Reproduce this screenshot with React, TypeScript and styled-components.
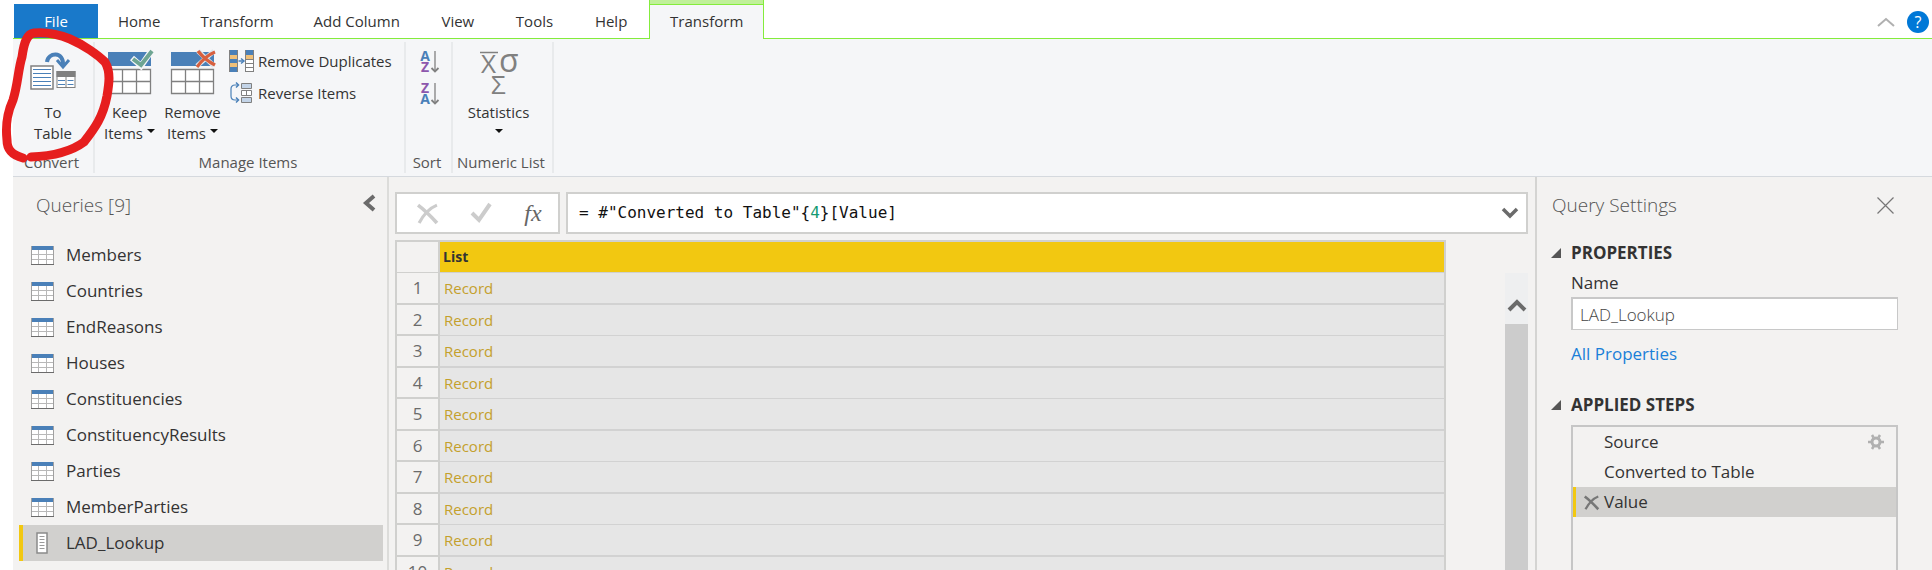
import React, { useState } from "react";
import styled, { createGlobalStyle, css } from "styled-components";

const c = {
  panel: "#f3f2f1",
  ribbon: "#f5f6f8",
  green: "#84ec3c",
  line: "#d0d0ce",
  text: "#333333",
  muted: "#6b6b6b",
  blue: "#4a80b8",
  yellow: "#f2c811",
  selected: "#d1d0ce",
};

const GlobalStyle = createGlobalStyle`
  *, *::before, *::after { box-sizing: border-box; }
  body {
    margin: 0;
    background: #ffffff;
    color: ${c.text};
    font: 15px/20px "Open Sans", "Noto Sans", sans-serif;
  }
  button, input { font: inherit; color: inherit; }
  button { padding: 0; border: 0; background: none; cursor: pointer; }
  ul, ol { margin: 0; padding: 0; list-style: none; }
  h2, h3 { margin: 0; }
  svg { display: block; flex: none; overflow: visible; }
`;

const Shell = styled.div`
  position: relative;
  display: flex;
  flex-direction: column;
  height: 100vh;
  padding-left: 13px;
  overflow: hidden;
`;

/* Tabs */

const TabBar = styled.nav`
  display: flex;
  align-items: stretch;
  height: 39px;
  padding-left: 1px;
  box-shadow: inset 0 -1px ${c.green};
`;

const Tab = styled.button<{ $kind?: "file" | "active" }>`
  min-width: 76px;
  padding: 4px 20px 1px;
  white-space: nowrap;
  ${(p) =>
    p.$kind === "file" &&
    css`
      width: 84px;
      margin: 4px 0 1px;
      padding: 0;
      background: #1979ca;
      color: #ffffff;
    `}
  ${(p) =>
    p.$kind === "active" &&
    css`
      border: 1px solid ${c.green};
      border-width: 0 1px;
      background: linear-gradient(#c0f09a 4px, ${c.green} 4px 5px, ${c.ribbon} 5px);
    `}
`;

const WindowTools = styled.div`
  display: flex;
  align-items: center;
  gap: 12px;
  margin-left: auto;
  padding: 4px 3px 0 0;
`;

const HelpButton = styled.button`
  width: 22px;
  height: 22px;
  border-radius: 50%;
  background: #0078d7;
  color: #ffffff;
  font-size: 16px;
`;

/* Ribbon */

const Ribbon = styled.div`
  display: flex;
  flex: none;
  padding: 3px 0;
  background: ${c.ribbon};
  border-bottom: 1px solid #d5d9de;
`;

const Group = styled.section<{ $width: number }>`
  display: flex;
  flex-direction: column;
  justify-content: space-between;
  width: ${(p) => p.$width}px;
  height: 131px;
  padding: 8px 0 1px;
  border-right: 2px solid #e8eaec;
`;

const GroupBody = styled.div<{ $center?: boolean; $end?: number }>`
  display: flex;
  justify-content: ${(p) => (p.$center ? "center" : "flex-start")};
  padding-left: ${(p) => (p.$center ? 0 : 3)}px;
  padding-right: ${(p) => p.$end ?? 0}px;
`;

const GroupLabel = styled.div`
  padding-right: 3px;
  color: #555555;
  text-align: center;
  white-space: nowrap;
`;

const LargeButton = styled.button`
  display: flex;
  flex-direction: column;
  align-items: center;
  width: 63px;
  line-height: 21px;
  white-space: nowrap;
`;

const LargeLabel = styled.span`
  display: flex;
  flex-direction: column;
  align-items: center;
  margin-top: 8px;
`;

const LabelLine = styled.span`
  display: flex;
  align-items: center;
  gap: 4px;
  min-height: 21px;
`;

const SmallColumn = styled.div`
  display: flex;
  flex-direction: column;
  gap: 10px;
`;

const ManageColumn = styled(SmallColumn)`
  padding-left: 5px;
`;

const SmallButton = styled.button`
  display: flex;
  align-items: center;
  gap: 4px;
  height: 22px;
  white-space: nowrap;
`;

const CaretShape = styled.span`
  border: 4px solid transparent;
  border-top-color: #111111;
  border-bottom: 0;
  margin-top: -6px;
`;

/* Work area */

const Work = styled.div`
  display: flex;
  flex: 1;
  min-height: 0;
  background: ${c.panel};
`;

const PanelHeader = styled.header`
  display: flex;
  align-items: center;
  justify-content: space-between;
  height: 56px;
`;

const PanelTitle = styled.h2`
  color: #555555;
  font-size: 19px;
  font-weight: 300;
  line-height: 24px;
`;

const QueriesPanel = styled.aside`
  flex: none;
  width: 376px;
  border-right: 2px solid #dcdcda;

  ${PanelHeader} { padding: 0 11px 0 23px; }
  ${PanelHeader} button { margin-top: -4px; }
`;

const QueryList = styled.ul`
  padding: 4px 4px 0 6px;
`;

const QueryItem = styled.button<{ $selected: boolean }>`
  display: flex;
  align-items: center;
  gap: 12px;
  width: 100%;
  height: 36px;
  padding-left: 8px;
  border-left: 4px solid ${(p) => (p.$selected ? c.yellow : "transparent")};
  background: ${(p) => (p.$selected ? c.selected : "transparent")};
  font-size: 17px;
  text-align: left;
`;

const Center = styled.main`
  display: flex;
  flex: 1;
  flex-direction: column;
  min-width: 0;
  padding: 15px 7px 0 6px;
`;

const FormulaRow = styled.div`
  display: flex;
  gap: 6px;
  height: 42px;
`;

const FormulaTools = styled.div`
  display: flex;
  align-items: center;
  gap: 32px;
  width: 165px;
  padding-left: 19px;
  border: 2px solid ${c.line};
  background: #ffffff;
`;

const ToolButton = styled.button`
  display: flex;
  align-items: center;
  justify-content: center;
  width: 22px;
  height: 32px;
`;

const FxButton = styled(ToolButton)`
  width: 18px;
  color: #666666;
  font: italic 24px/32px "Liberation Serif", serif;
`;

const FormulaBox = styled.div`
  display: flex;
  flex: 1;
  align-items: center;
  padding-right: 8px;
  border: 2px solid ${c.line};
  background: #ffffff;
`;

const FormulaEditor = styled.div`
  position: relative;
  flex: 1;
  padding-left: 11px;
  color: #111111;
  font: 16px/24px "DejaVu Sans Mono", monospace;
  white-space: pre;
`;

const FormulaNumber = styled.span`
  color: #159a72;
`;

/* Typing surface laid over the coloured formula. */
const FormulaInput = styled.input`
  position: absolute;
  inset: 0;
  width: 100%;
  padding: 0 0 0 11px;
  border: 0;
  outline: 0;
  background: transparent;
  color: transparent;
  caret-color: #111111;
`;

const GridArea = styled.div`
  display: flex;
  flex: 1;
  gap: 59px;
  min-height: 0;
  margin-top: 6px;
  overflow: hidden;
`;

const Grid = styled.table`
  flex: 1;
  align-self: flex-start;
  border: 2px solid ${c.line};
  border-width: 2px 2px 0;
  border-spacing: 0;
  table-layout: fixed;
`;

const Corner = styled.td`
  width: 43px;
  height: 31px;
  padding: 0;
  border-right: 2px solid ${c.line};
  border-bottom: 1px solid ${c.line};
`;

const ColumnHead = styled.th`
  padding: 0 3px;
  border-bottom: 1px solid ${c.line};
  background: ${c.yellow};
  font-size: 14px;
  text-align: left;
`;

const RowNumber = styled.th`
  padding: 0;
  border-right: 2px solid ${c.line};
  border-bottom: 2px solid ${c.line};
  color: ${c.muted};
  font-size: 17px;
  font-weight: 400;
`;

const RecordCell = styled.td`
  padding: 0 4px;
  border-bottom: 1px solid #d2d2d2;
  background: #e6e6e6;
`;

const GridRow = styled.tr`
  height: 31px;

  &:nth-child(odd) { height: 32px; }
  &:nth-child(odd) ${RecordCell} { border-bottom-width: 2px; }
`;

const RecordLink = styled.a`
  color: #c4a02c;
  text-decoration: none;
`;

const ScrollTrack = styled.div`
  display: flex;
  flex: none;
  flex-direction: column;
  width: 23px;
  margin-top: 33px;
  background: #eeeff0;
`;

const ScrollUp = styled.button`
  display: flex;
  align-items: flex-end;
  justify-content: center;
  height: 51px;
  padding-bottom: 12px;
`;

const ScrollThumb = styled.div`
  flex: 1;
  background: #cccccc;
`;

const SettingsPanel = styled.aside`
  display: flex;
  flex: none;
  flex-direction: column;
  width: 397px;
  padding: 0 34px 0 14px;
  border-left: 2px solid #d4d4d2;
  font-size: 17px;
  line-height: 24px;

  ${PanelHeader} { margin: 0 4px 8px 1px; }
`;

const SectionTitle = styled.h3`
  display: flex;
  align-items: center;
  gap: 10px;
  font-size: 17px;
  line-height: 24px;
`;

const SectionBody = styled.div<{ $grow?: boolean }>`
  display: flex;
  flex: ${(p) => (p.$grow ? 1 : "none")};
  flex-direction: column;
  align-items: stretch;
  padding-left: 20px;
`;

const FieldLabel = styled.label`
  margin-top: 6px;
`;

const NameInput = styled.input`
  height: 33px;
  margin: 2px 0 12px;
  padding: 0 7px;
  border: 1px solid #c8c8c8;
  border-top-width: 2px;
  border-left-width: 2px;
  background: #ffffff;
  color: #444444;
  font-weight: 300;
`;

const PropertiesLink = styled.a`
  align-self: flex-start;
  margin-bottom: 27px;
  color: #1a7fd8;
  text-decoration: none;
`;

const StepList = styled.ol`
  flex: 1;
  margin-top: 8px;
  border: 2px solid #c6c6c6;
  border-bottom: 0;
`;

const Step = styled.li<{ $selected: boolean }>`
  display: flex;
  align-items: center;
  height: 30px;
  padding-right: 12px;
  border-left: 3px solid ${(p) => (p.$selected ? c.yellow : "transparent")};
  background: ${(p) => (p.$selected ? c.selected : "transparent")};
`;

const StepDelete = styled.button`
  display: flex;
  justify-content: flex-end;
  width: 23px;
  margin-right: 5px;
`;

const StepName = styled.button`
  flex: 1;
  text-align: left;
`;

const Annotation = styled.svg`
  position: absolute;
  top: 0;
  left: 0;
  pointer-events: none;
`;

/* Icons */

const ToTableIcon = () => (
  <svg width="46" height="44" viewBox="0 0 46 44" fill="none">
    <path d="M17 12C18 2 34 1 33 15" stroke={c.blue} strokeWidth="4" />
    <path d="M27 10l6 7 6-7" stroke={c.blue} strokeWidth="3" />
    <rect x="1" y="16" width="22" height="23" fill="#fff" stroke="#808080" strokeWidth="1.500" />
    <path d="M3 19.500h18M3 23.500h18M3 27.500h18M3 31.500h18M3 35.500h18" stroke={c.blue} />
    <rect x="27" y="21.500" width="18" height="16" fill="#fff" stroke="#808080" />
    <path d="M26.500 24h19" stroke="#808080" strokeWidth="6" />
    <path d="M36 27v10" stroke="#808080" />
    <path d="M28 30.500h7M37.500 30.500h6M28 34.500h7M37.500 34.500h6" stroke={c.blue} />
  </svg>
);

const ItemsIcon = ({ mark }: { mark: "check" | "cross" }) => (
  <svg width="46" height="44" viewBox="0 0 46 44" fill="none">
    <path d="M1 2h43v14H1z" fill={c.blue} />
    <path d="M1.500 19.500h42v24h-42zM15.500 19v24M29.500 19v24M1 31.500h43" fill="#fff" stroke="#808080" strokeWidth="1.300" />
    {mark === "check" ? (
      <>
        <path d="M25 8l9 8L45 0" stroke="#f5f6f8" strokeWidth="6" />
        <path d="M26 9l8 6L45 1" stroke="#6ea592" strokeWidth="4" />
      </>
    ) : (
      <>
        <path d="M28 1l16 15M44 1L27 16" stroke="#dfe6ee" strokeWidth="5" />
        <path d="M28 1Q35 10 45 15" stroke="#d7603f" strokeWidth="3.500" />
        <path d="M45 2Q35 6 27 17" stroke="#d7603f" strokeWidth="3" />
      </>
    )}
  </svg>
);

const DuplicatesIcon = () => (
  <svg width="25" height="22" viewBox="0 0 25 22" fill="none">
    <path d="M1 0h7v22H1zM17 0h7v22h-7z" fill="#fff" />
    <path d="M1 0h7v5H1zM1 9h7v4H1zM1 17h7v5H1zM17 0h7v5h-7z" fill={c.blue} />
    <path d="M1 5h7v4H1zM1 13h7v4H1zM17 5h7v4h-7z" fill="#f0c078" />
    <path d="M.5 0v22M8.500 0v22M16.500 0v22M24.500 0v22M17 13.500h7M17 17.500h7M17 21.500h7M17 9.500h7" stroke="#808080" />
    <path d="M9.500 11h4M12 8.500l3 2.500-3 2.500" stroke={c.blue} strokeWidth="1.500" />
  </svg>
);

const ReverseIcon = () => (
  <svg width="25" height="22" viewBox="0 0 25 22" fill="none">
    <path d="M9 3H6Q2 3 2 7v7q0 4 4 4h3" stroke={c.blue} strokeWidth="1.200" />
    <path d="M7 .5L9.500 3 7 5.500M7 15.500l2.500 2.500L7 20.500" stroke={c.blue} strokeWidth="1.500" />
    <path d="M12.500 1.500h10v5h-10zM12.500 15.500h10v5h-10z" fill="#c3d4e8" stroke="#808080" />
    <path d="M12.500 8.500h10v5h-10zM17.500 8.500v5" fill="#fff" stroke="#808080" />
  </svg>
);

const SortLetters = styled.text`
  font: 700 14px "Open Sans", sans-serif;
  text-anchor: middle;
`;

const SortIcon = ({ descending = false }: { descending?: boolean }) => (
  <svg width="22" height="24" viewBox="0 0 22 24" fill="none">
    <SortLetters x="7" y="12" fill={descending ? "#8d57ad" : c.blue}>{descending ? "Z" : "A"}</SortLetters>
    <SortLetters x="7" y="23" fill={descending ? c.blue : "#8d57ad"}>{descending ? "A" : "Z"}</SortLetters>
    <path d="M17 2v20" stroke="#808080" strokeWidth="1.300" />
    <path d="M13.500 19l3.500 3.500 3.500-3.500" stroke="#808080" strokeWidth="1.800" />
  </svg>
);

const StatLetters = styled.text<{ $size?: number }>`
  font: ${(p) => p.$size ?? 26}px "Open Sans", "Noto Sans", sans-serif;
  fill: #808080;
`;

const StatisticsIcon = () => (
  <svg width="42" height="44" viewBox="0 0 42 44">
    <StatLetters x="3" y="23">X</StatLetters>
    <StatLetters $size={32} x="21" y="22">σ</StatLetters>
    <StatLetters x="13" y="44">Σ</StatLetters>
    <path d="M2 2.500h18" stroke="#808080" strokeWidth="1.500" />
  </svg>
);

const TableIcon = () => (
  <svg width="23" height="19" viewBox="0 0 23 19" fill="none">
    <path d="M0 0h23v19H0z" fill="#fff" />
    <path d="M1 8.500h21M1 13.500h21M7.500 4v14M15.500 4v14" stroke="#b8b8b8" />
    <path d="M.5 0v19M22.500 0v19" stroke="#a0a0a0" />
    <path d="M0 18.500h23" stroke="#6b6b6b" />
    <path d="M1 0h21v4H1z" fill={c.blue} />
  </svg>
);

const ListIcon = () => (
  <svg width="23" height="22" viewBox="0 0 23 22" fill="none">
    <rect x="6" y="1" width="10" height="20" fill="#fff" stroke="#8a8a8a" strokeWidth="1.500" />
    <path d="M8.500 4.500h5M8.500 7.500h5M8.500 10.500h5M8.500 13.500h5M8.500 16.500h5" stroke="#9a9a9a" />
  </svg>
);

const CrossMark = ({ size, color }: { size: number; color: string }) => (
  <svg width={size} height={size} viewBox="0 0 20 20" fill="none" stroke={color}>
    <path d="M1 2Q9 8 19 19" strokeWidth="3.500" />
    <path d="M19 2Q9 6 2 19" strokeWidth="3" />
  </svg>
);

const GearIcon = () => (
  <svg width="16" height="16" viewBox="0 0 16 16" fill="none" stroke="#b0b0b0">
    <circle cx="8" cy="8" r="4" strokeWidth="3" />
    <path d="M0 8h3M13 8h3M4 1l1.500 2.500M12 1l-1.500 2.500M4 15l1.500-2.500M12 15l-1.500-2.500" strokeWidth="2.500" />
  </svg>
);

const SectionArrow = () => (
  <svg width="10" height="10" viewBox="0 0 10 10">
    <path d="M10 0v10H0z" fill="#555555" />
  </svg>
);

/* Data */

const tabs = ["Home", "Transform", "Add Column", "View", "Tools", "Help"];
const queries = [
  "Members",
  "Countries",
  "EndReasons",
  "Houses",
  "Constituencies",
  "ConstituencyResults",
  "Parties",
  "MemberParties",
  "LAD_Lookup",
];
const steps = ["Source", "Converted to Table", "Value"];
const rows = Array.from({ length: 10 }, (_, i) => i + 1);

export default function App() {
  const [query, setQuery] = useState("LAD_Lookup");
  const [name, setName] = useState("LAD_Lookup");
  const [step, setStep] = useState("Value");
  const [formula, setFormula] = useState('= #"Converted to Table"{4}[Value]');

  return (
    <Shell>
      <GlobalStyle />
      <TabBar>
        <Tab $kind="file">File</Tab>
        {tabs.map((t) => (
          <Tab key={t}>{t}</Tab>
        ))}
        <Tab $kind="active">Transform</Tab>
        <WindowTools>
          <button aria-label="Collapse ribbon">
            <svg width="18" height="10" viewBox="0 0 18 10" fill="none">
              <path d="M1 9l8-7 8 7" stroke="#b0b0b0" strokeWidth="2" />
            </svg>
          </button>
          <HelpButton>?</HelpButton>
        </WindowTools>
      </TabBar>

      <Ribbon>
        <Group $width={82}>
          <GroupBody $center>
            <LargeButton>
              <ToTableIcon />
              <LargeLabel>
                <LabelLine>To</LabelLine>
                <LabelLine>Table</LabelLine>
              </LargeLabel>
            </LargeButton>
          </GroupBody>
          <GroupLabel>Convert</GroupLabel>
        </Group>
        <Group $width={311}>
          <GroupBody>
            <LargeButton>
              <ItemsIcon mark="check" />
              <LargeLabel>
                <LabelLine>Keep</LabelLine>
                <LabelLine>Items<CaretShape /></LabelLine>
              </LargeLabel>
            </LargeButton>
            <LargeButton>
              <ItemsIcon mark="cross" />
              <LargeLabel>
                <LabelLine>Remove</LabelLine>
                <LabelLine>Items<CaretShape /></LabelLine>
              </LargeLabel>
            </LargeButton>
            <ManageColumn>
              <SmallButton><DuplicatesIcon />Remove Duplicates</SmallButton>
              <SmallButton><ReverseIcon />Reverse Items</SmallButton>
            </ManageColumn>
          </GroupBody>
          <GroupLabel>Manage Items</GroupLabel>
        </Group>
        <Group $width={47}>
          <GroupBody $center>
            <SmallColumn>
              <SmallButton aria-label="Sort ascending"><SortIcon /></SmallButton>
              <SmallButton aria-label="Sort descending"><SortIcon descending /></SmallButton>
            </SmallColumn>
          </GroupBody>
          <GroupLabel>Sort</GroupLabel>
        </Group>
        <Group $width={101}>
          <GroupBody $center $end={8}>
            <LargeButton>
              <StatisticsIcon />
              <LargeLabel>
                <LabelLine>Statistics</LabelLine>
                <LabelLine><CaretShape /></LabelLine>
              </LargeLabel>
            </LargeButton>
          </GroupBody>
          <GroupLabel>Numeric List</GroupLabel>
        </Group>
      </Ribbon>

      <Work>
        <QueriesPanel>
          <PanelHeader>
            <PanelTitle>Queries [9]</PanelTitle>
            <button aria-label="Collapse queries">
              <svg width="13" height="18" viewBox="0 0 13 18" fill="none">
                <path d="M11 2L3 9l8 7" stroke="#6b6b6b" strokeWidth="4" />
              </svg>
            </button>
          </PanelHeader>
          <QueryList>
            {queries.map((q) => (
              <li key={q}>
                <QueryItem $selected={q === query} onClick={() => setQuery(q)}>
                  {q === "LAD_Lookup" ? <ListIcon /> : <TableIcon />}
                  {q}
                </QueryItem>
              </li>
            ))}
          </QueryList>
        </QueriesPanel>

        <Center>
          <FormulaRow>
            <FormulaTools>
              <ToolButton aria-label="Cancel"><CrossMark size={21} color="#cccccc" /></ToolButton>
              <ToolButton aria-label="Commit">
                <svg width="20" height="20" viewBox="0 0 20 20" fill="none">
                  <path d="M1 10l7 7L19 1" stroke="#cccccc" strokeWidth="4" />
                </svg>
              </ToolButton>
              <FxButton>fx</FxButton>
            </FormulaTools>
            <FormulaBox>
              <FormulaEditor>
                {formula.split(/(\d+)/).map((part, i) =>
                  i % 2 ? <FormulaNumber key={i}>{part}</FormulaNumber> : part
                )}
                <FormulaInput
                  aria-label="Formula"
                  spellCheck={false}
                  value={formula}
                  onChange={(e) => setFormula(e.target.value)}
                />
              </FormulaEditor>
              <button aria-label="Expand formula bar">
                <svg width="16" height="12" viewBox="0 0 16 12" fill="none">
                  <path d="M1 2l7 7 7-7" stroke="#6b6b6b" strokeWidth="3.500" />
                </svg>
              </button>
            </FormulaBox>
          </FormulaRow>
          <GridArea>
            <Grid>
              <thead>
                <tr>
                  <Corner />
                  <ColumnHead scope="col">List</ColumnHead>
                </tr>
              </thead>
              <tbody>
                {rows.map((n) => (
                  <GridRow key={n}>
                    <RowNumber scope="row">{n}</RowNumber>
                    <RecordCell><RecordLink href="#record">Record</RecordLink></RecordCell>
                  </GridRow>
                ))}
              </tbody>
            </Grid>
            <ScrollTrack>
              <ScrollUp aria-label="Scroll up">
                <svg width="18" height="14" viewBox="0 0 18 14" fill="none">
                  <path d="M1 12l8-8 8 8" stroke="#6b6b6b" strokeWidth="4" />
                </svg>
              </ScrollUp>
              <ScrollThumb />
            </ScrollTrack>
          </GridArea>
        </Center>

        <SettingsPanel>
          <PanelHeader>
            <PanelTitle>Query Settings</PanelTitle>
            <button aria-label="Close settings">
              <svg width="17" height="17" viewBox="0 0 17 17" fill="none">
                <path d="M.5 .5l16 16M16.500 .5l-16 16" stroke="#777777" strokeWidth="1.200" />
              </svg>
            </button>
          </PanelHeader>
          <SectionTitle><SectionArrow />PROPERTIES</SectionTitle>
          <SectionBody>
            <FieldLabel htmlFor="query-name">Name</FieldLabel>
            <NameInput id="query-name" value={name} onChange={(e) => setName(e.target.value)} />
            <PropertiesLink href="#properties">All Properties</PropertiesLink>
          </SectionBody>
          <SectionTitle><SectionArrow />APPLIED STEPS</SectionTitle>
          <SectionBody $grow>
            <StepList>
              {steps.map((s) => (
                <Step key={s} $selected={s === step}>
                  <StepDelete aria-label={`Delete ${s}`}>
                    {s === step && <CrossMark size={15} color="#777777" />}
                  </StepDelete>
                  <StepName onClick={() => setStep(s)}>{s}</StepName>
                  {s === "Source" && <button aria-label="Edit source"><GearIcon /></button>}
                </Step>
              ))}
            </StepList>
          </SectionBody>
        </SettingsPanel>
      </Work>

      <Annotation width="120" height="170" viewBox="0 0 120 170" fill="none">
        <path
          d="M23 158C12 155 7 150 7 140C5 122 8 111 13 100C18 84 18 70 22 57C24 42 27 34 34 33C46 32 58 34 70 39C84 45 98 55 105 62C111 72 109 84 107 96C103 117 95 128 84 142C72 151 54 156 31 157"
          stroke="#e61e1e"
          strokeWidth="9"
          strokeLinecap="round"
          strokeLinejoin="round"
        />
      </Annotation>
    </Shell>
  );
}
